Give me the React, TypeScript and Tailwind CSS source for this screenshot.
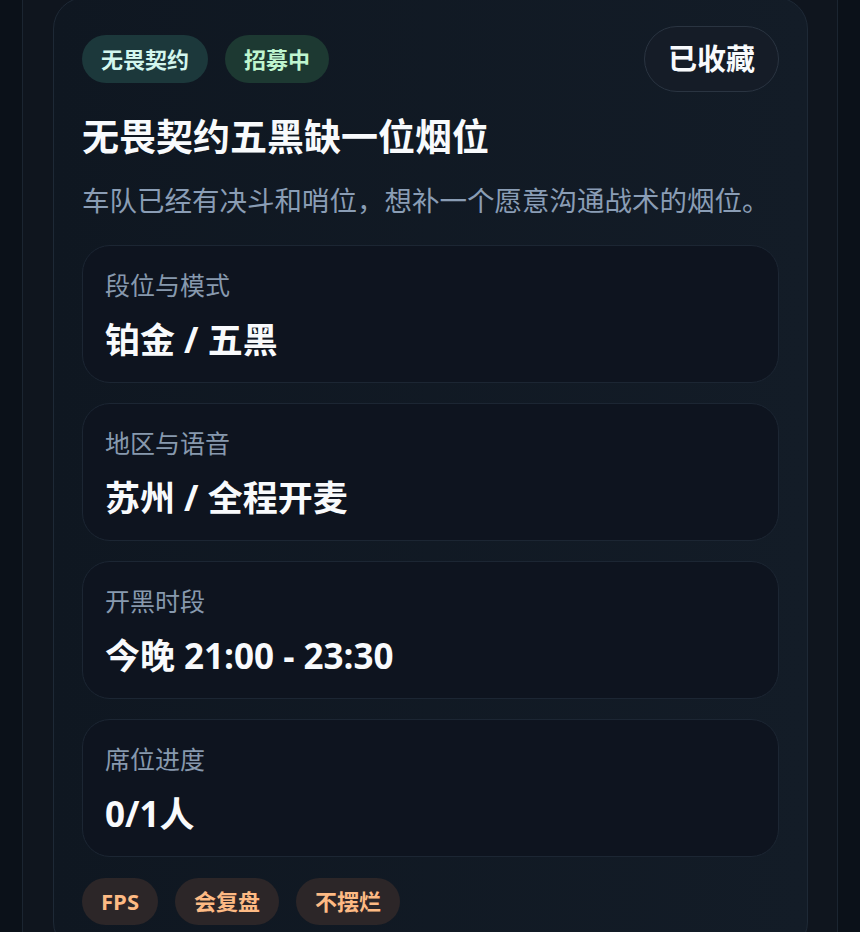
import { Fragment } from 'react';

type Field = { label: string; value: string };

const fields: Field[] = [
  { label: '段位与模式', value: '铂金 / 五黑' },
  { label: '地区与语音', value: '苏州 / 全程开麦' },
  { label: '开黑时段', value: '今晚 21:00 - 23:30' },
  { label: '席位进度', value: '0/1人' },
];

const traits = ['FPS', '会复盘', '不摆烂'];

const font = { fontFamily: '"Open Sans", "Noto Sans CJK SC", sans-serif' };

const App = () => {
  return (
    <div className="min-h-screen bg-[#0b1119] px-[22px]" style={font}>
      <div className="border-x border-[#1b2531] bg-[#0f151e] pl-[30px] pr-[29px] pb-10">
        {/* Squad card */}
        <div className="-mt-[3px] rounded-[32px] border border-[#1e2936] bg-linear-to-r from-[#0f1721] to-[#131c27] p-7">
          <div className="flex items-center justify-between">
            <div className="flex items-center gap-[17px]">
              <span className="flex h-[48px] items-center rounded-full bg-[#1c383b] px-[19px] text-[22px] font-bold text-[#d3f6ee]">
                无畏契约
              </span>
              <span className="flex h-[48px] items-center rounded-full bg-[#1d3932] px-[19px] text-[22px] font-bold text-[#bff5cf]">
                招募中
              </span>
            </div>
            <button className="flex h-[66px] items-center rounded-full border border-[#2a3441] bg-[#151c27] px-[23px] text-[29px] font-bold text-[#f8fafc]">
              已收藏
            </button>
          </div>

          <h1 className="mt-[21px] text-[37px] font-bold leading-[47px] text-[#f8fafc]">
            无畏契约五黑缺一位烟位
          </h1>
          <p className="mt-[18px] text-[27.5px] leading-[45px] text-[#8a9db5]">
            车队已经有决斗和哨位，想补一个愿意沟通战术的烟位。
          </p>

          <div className="mt-[22px] flex flex-col gap-5">
            {fields.map((f) => (
              <Fragment key={f.label}>
                <div className="rounded-[28px] border border-[#1c2633] bg-[#0e141f] px-[22px] py-[22px]">
                  <div className="text-[25px] leading-[35px] text-[#8799ae]">{f.label}</div>
                  <div className="mt-[17px] text-[35px] font-bold leading-[40px] text-[#f8fafc]">
                    {f.value}
                  </div>
                </div>
              </Fragment>
            ))}
          </div>

          <div className="mt-[21px] flex items-center gap-[17px]">
            {traits.map((t) => (
              <span
                key={t}
                className="flex h-[47px] items-center rounded-full bg-[#2c2628] px-[19px] text-[22px] font-bold text-[#fdba84]"
              >
                {t}
              </span>
            ))}
          </div>
        </div>
      </div>
    </div>
  );
};

export default App;
